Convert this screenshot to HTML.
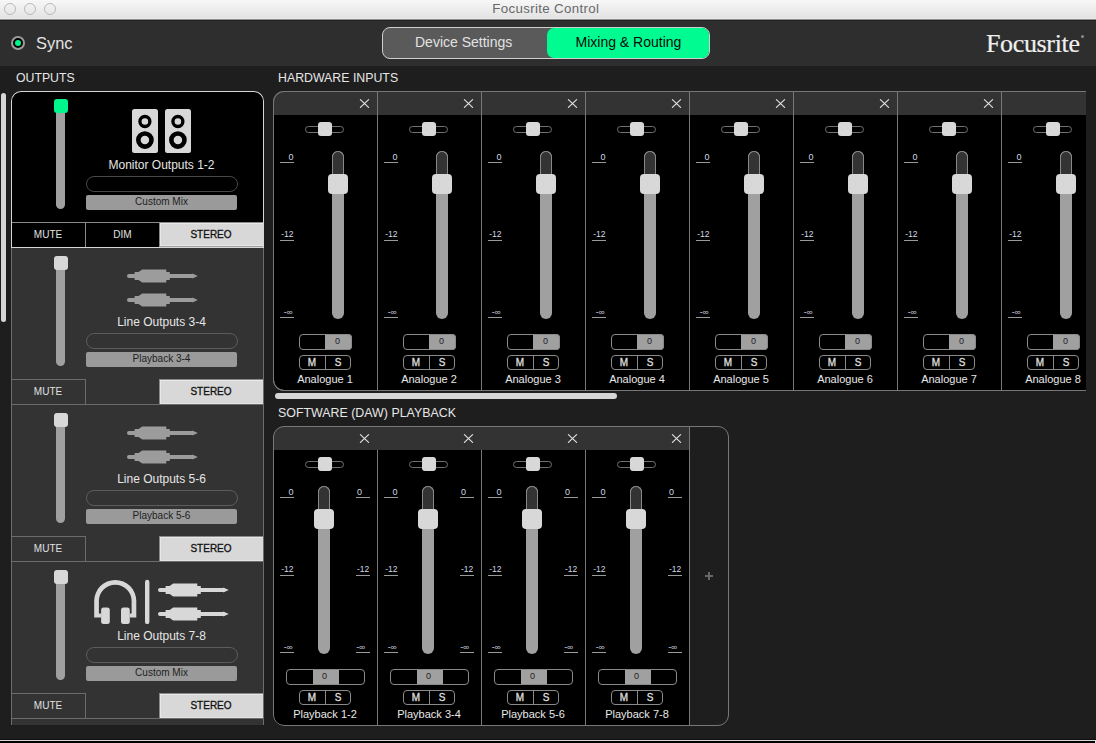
<!DOCTYPE html>
<html><head><meta charset="utf-8"><title>Focusrite Control</title>
<style>
*{margin:0;padding:0;box-sizing:border-box;}
html,body{width:1096px;height:743px;overflow:hidden;background:#1e1e1e;font-family:"Liberation Sans",sans-serif;}
.ab{position:absolute;}
.t{position:absolute;white-space:nowrap;line-height:1;}
</style></head><body>

<div class="ab" style="left:0;top:0;width:1096px;height:18px;background:linear-gradient(#f7f7f7,#e3e3e3);"></div>
<div class="ab" style="left:0;top:18px;width:1096px;height:1px;background:#eaeaea;"></div>
<div class="ab" style="left:0;top:19px;width:1096px;height:1px;background:#8c8c8c;"></div>
<div class="ab" style="left:0;top:20px;width:1096px;height:1px;background:#222;"></div>
<div class="ab" style="left:4px;top:3px;width:12px;height:12px;border-radius:50%;border:1px solid #b9b9b9;background:linear-gradient(#f2f2f2,#e6e6e6);"></div>
<div class="ab" style="left:24px;top:3px;width:12px;height:12px;border-radius:50%;border:1px solid #b9b9b9;background:linear-gradient(#f2f2f2,#e6e6e6);"></div>
<div class="ab" style="left:44px;top:3px;width:12px;height:12px;border-radius:50%;border:1px solid #b9b9b9;background:linear-gradient(#f2f2f2,#e6e6e6);"></div>
<div class="t" style="left:492.2px;top:2.0px;font-size:13.3px;letter-spacing:0.35px;color:#686868;">Focusrite Control</div>
<div class="ab" style="left:0;top:21px;width:1096px;height:45px;background:#2e2e2e;"></div>
<div class="ab" style="left:11px;top:36px;width:14px;height:14px;border-radius:50%;border:2px solid #9c9c9c;background:#000;"></div>
<div class="ab" style="left:14.6px;top:39.6px;width:6.8px;height:6.8px;border-radius:50%;background:#00f58c;"></div>
<div class="t" style="left:36px;top:35.2px;font-size:16.4px;color:#e4e4e4;">Sync</div>
<div class="ab" style="left:382px;top:27px;width:328px;height:32px;border-radius:8px;border:1px solid #cfcfcf;background:#5a5a5a;"></div>
<div class="ab" style="left:547px;top:28px;width:162px;height:30px;border-radius:7px;background:#00fc90;"></div>
<div class="t" style="left:415px;top:34.5px;font-size:14px;color:#e2e2e2;">Device Settings</div>
<div class="t" style="left:575.5px;top:34.5px;font-size:14px;color:#0a0a0a;">Mixing &amp; Routing</div>
<div class="t" style="left:986px;top:30.7px;font-family:'Liberation Serif',serif;font-size:26px;letter-spacing:-0.35px;color:#f0f0f0;-webkit-text-stroke:0.2px #f0f0f0;">Focusrite</div>
<div class="ab" style="left:1080.6px;top:34.8px;width:3.2px;height:3.2px;border-radius:50%;background:#8a8a8a;"></div>
<div class="t" style="left:16px;top:70.6px;font-size:13.6px;transform:scaleX(0.903);transform-origin:0 0;color:#e6e6e6;">OUTPUTS</div>
<div class="t" style="left:278.2px;top:70.7px;font-size:13.6px;transform:scaleX(0.907);transform-origin:0 0;color:#e6e6e6;">HARDWARE INPUTS</div>
<div class="t" style="left:278px;top:405.9px;font-size:13.6px;transform:scaleX(0.912);transform-origin:0 0;color:#e6e6e6;">SOFTWARE (DAW) PLAYBACK</div>
<div class="ab" style="left:0.9px;top:93px;width:5.3px;height:229px;border-radius:2.65px;background:#d6d6d6;"></div>
<div class="ab" style="left:275px;top:393px;width:342px;height:6px;border-radius:3px;background:#d6d6d6;"></div>
<div class="ab" style="left:11px;top:91px;width:253px;height:634px;overflow:hidden;border-radius:10px 10px 0 0;">
<div class="ab" style="left:0;top:0px;width:253px;height:156px;background:#000;"></div>
<div class="ab" style="left:0;top:156px;width:253px;height:157px;background:#333;"></div>
<div class="ab" style="left:0;top:313px;width:253px;height:157px;background:#333;"></div>
<div class="ab" style="left:0;top:470px;width:253px;height:164px;background:#333;"></div>
<div class="ab" style="left:45px;top:13px;width:9px;height:104.5px;border-radius:0 0 4.5px 4.5px;background:#a0a0a0;"></div>
<div class="ab" style="left:43px;top:8px;width:14px;height:14px;border-radius:3px;background:#00f58c;"></div>
<div class="t" style="left:75px;width:151px;text-align:center;top:68px;font-size:12px;color:#e6e6e6;">Monitor Outputs 1-2</div>
<div class="ab" style="left:74.5px;top:84.5px;width:152px;height:16px;border-radius:8px;border:1.4px solid #484848;"></div>
<div class="ab" style="left:75px;top:104px;width:151px;height:14.5px;border-radius:2px;background:#9a9a9a;"></div>
<div class="t" style="left:75px;width:151px;text-align:center;top:106px;font-size:10px;color:#1e1e1e;">Custom Mix</div>
<svg class="ab" style="left:121px;top:18px;" width="26" height="44" viewBox="0 0 26 44"><rect x="0" y="0" width="26" height="44" rx="2.5" fill="#d8d8d8"/><circle cx="12.9" cy="12.5" r="4.97" fill="none" stroke="#000" stroke-width="3.35"/><circle cx="12.9" cy="31.1" r="6.56" fill="none" stroke="#000" stroke-width="4.62"/></svg>
<svg class="ab" style="left:154px;top:18px;" width="26" height="44" viewBox="0 0 26 44"><rect x="0" y="0" width="26" height="44" rx="2.5" fill="#d8d8d8"/><circle cx="12.9" cy="12.5" r="4.97" fill="none" stroke="#000" stroke-width="3.35"/><circle cx="12.9" cy="31.1" r="6.56" fill="none" stroke="#000" stroke-width="4.62"/></svg>
<div class="ab" style="left:0;top:131px;width:253px;height:1px;background:#8a8a8a;"></div>
<div class="ab" style="left:74px;top:131px;width:1px;height:25px;background:#8a8a8a;"></div>
<div class="t" style="left:0;width:74px;text-align:center;top:139px;font-size:10px;color:#e0e0e0;">MUTE</div>
<div class="t" style="left:75px;width:73px;text-align:center;top:139px;font-size:10px;color:#e0e0e0;">DIM</div>
<div class="ab" style="left:148px;top:131px;width:104px;height:25px;background:#d8d8d8;border-left:1px solid #8a8a8a;border-top:1px solid #8a8a8a;border-bottom:1px solid #a0a0a0;box-shadow:inset 1px 1px 0 #e8e8e8,inset 0 -1px 0 #e4e4e4;"></div>
<div class="t" style="left:148px;width:104px;text-align:center;top:139px;font-size:10px;color:#111;-webkit-text-stroke:0.3px #111;">STEREO</div>
<div class="ab" style="left:0;top:156px;width:253px;height:1px;background:#d6d6d6;"></div>
<div class="ab" style="left:45px;top:170px;width:9px;height:104.5px;border-radius:0 0 4.5px 4.5px;background:#a0a0a0;"></div>
<div class="ab" style="left:43px;top:165px;width:14px;height:14px;border-radius:3px;background:#d8d8d8;"></div>
<div class="t" style="left:75px;width:151px;text-align:center;top:225px;font-size:12px;color:#e6e6e6;">Line Outputs 3-4</div>
<div class="ab" style="left:74.5px;top:241.5px;width:152px;height:16px;border-radius:8px;border:1.4px solid #5c5c5c;"></div>
<div class="ab" style="left:75px;top:261px;width:151px;height:14.5px;border-radius:2px;background:#9a9a9a;"></div>
<div class="t" style="left:75px;width:151px;text-align:center;top:263px;font-size:10px;color:#1e1e1e;">Playback 3-4</div>
<svg class="ab" style="left:116.4px;top:177px;" width="72" height="16" viewBox="0 0 72 16"><g fill="#9c9c9c"><rect x="0" y="6" width="10" height="4" rx="2"/><path d="M7.6 4.2 Q7.6 4 8 4 L11.6 4 L15.2 1.6 L39.3 1.6 L39.3 4 L42.8 4 L42.8 12 L39.3 12 L39.3 14.4 L15.2 14.4 L11.6 12 L8 12 Q7.6 12 7.6 11.8 Z"/><rect x="42" y="6" width="24.5" height="4"/><path d="M65.3 5.4 L70.8 8 L65.3 10.6 Z"/></g></svg>
<svg class="ab" style="left:116.4px;top:201px;" width="72" height="16" viewBox="0 0 72 16"><g fill="#9c9c9c"><rect x="0" y="6" width="10" height="4" rx="2"/><path d="M7.6 4.2 Q7.6 4 8 4 L11.6 4 L15.2 1.6 L39.3 1.6 L39.3 4 L42.8 4 L42.8 12 L39.3 12 L39.3 14.4 L15.2 14.4 L11.6 12 L8 12 Q7.6 12 7.6 11.8 Z"/><rect x="42" y="6" width="24.5" height="4"/><path d="M65.3 5.4 L70.8 8 L65.3 10.6 Z"/></g></svg>
<div class="ab" style="left:0;top:288px;width:75px;height:25px;border-top:1px solid #6c6c6c;border-right:1px solid #6c6c6c;"></div>
<div class="t" style="left:0;width:74px;text-align:center;top:296px;font-size:10px;color:#e0e0e0;">MUTE</div>
<div class="ab" style="left:148px;top:288px;width:104px;height:25px;background:#d8d8d8;border-left:1px solid #8a8a8a;border-top:1px solid #8a8a8a;box-shadow:inset 1px 1px 0 #e8e8e8,inset 0 -1px 0 #e4e4e4;"></div>
<div class="t" style="left:148px;width:104px;text-align:center;top:296px;font-size:10px;color:#111;-webkit-text-stroke:0.3px #111;">STEREO</div>
<div class="ab" style="left:0;top:313px;width:253px;height:1px;background:#6c6c6c;"></div>
<div class="ab" style="left:45px;top:327px;width:9px;height:104.5px;border-radius:0 0 4.5px 4.5px;background:#a0a0a0;"></div>
<div class="ab" style="left:43px;top:322px;width:14px;height:14px;border-radius:3px;background:#d8d8d8;"></div>
<div class="t" style="left:75px;width:151px;text-align:center;top:382px;font-size:12px;color:#e6e6e6;">Line Outputs 5-6</div>
<div class="ab" style="left:74.5px;top:398.5px;width:152px;height:16px;border-radius:8px;border:1.4px solid #5c5c5c;"></div>
<div class="ab" style="left:75px;top:418px;width:151px;height:14.5px;border-radius:2px;background:#9a9a9a;"></div>
<div class="t" style="left:75px;width:151px;text-align:center;top:420px;font-size:10px;color:#1e1e1e;">Playback 5-6</div>
<svg class="ab" style="left:116.4px;top:334px;" width="72" height="16" viewBox="0 0 72 16"><g fill="#9c9c9c"><rect x="0" y="6" width="10" height="4" rx="2"/><path d="M7.6 4.2 Q7.6 4 8 4 L11.6 4 L15.2 1.6 L39.3 1.6 L39.3 4 L42.8 4 L42.8 12 L39.3 12 L39.3 14.4 L15.2 14.4 L11.6 12 L8 12 Q7.6 12 7.6 11.8 Z"/><rect x="42" y="6" width="24.5" height="4"/><path d="M65.3 5.4 L70.8 8 L65.3 10.6 Z"/></g></svg>
<svg class="ab" style="left:116.4px;top:358px;" width="72" height="16" viewBox="0 0 72 16"><g fill="#9c9c9c"><rect x="0" y="6" width="10" height="4" rx="2"/><path d="M7.6 4.2 Q7.6 4 8 4 L11.6 4 L15.2 1.6 L39.3 1.6 L39.3 4 L42.8 4 L42.8 12 L39.3 12 L39.3 14.4 L15.2 14.4 L11.6 12 L8 12 Q7.6 12 7.6 11.8 Z"/><rect x="42" y="6" width="24.5" height="4"/><path d="M65.3 5.4 L70.8 8 L65.3 10.6 Z"/></g></svg>
<div class="ab" style="left:0;top:445px;width:75px;height:25px;border-top:1px solid #6c6c6c;border-right:1px solid #6c6c6c;"></div>
<div class="t" style="left:0;width:74px;text-align:center;top:453px;font-size:10px;color:#e0e0e0;">MUTE</div>
<div class="ab" style="left:148px;top:445px;width:104px;height:25px;background:#d8d8d8;border-left:1px solid #8a8a8a;border-top:1px solid #8a8a8a;box-shadow:inset 1px 1px 0 #e8e8e8,inset 0 -1px 0 #e4e4e4;"></div>
<div class="t" style="left:148px;width:104px;text-align:center;top:453px;font-size:10px;color:#111;-webkit-text-stroke:0.3px #111;">STEREO</div>
<div class="ab" style="left:0;top:470px;width:253px;height:1px;background:#6c6c6c;"></div>
<div class="ab" style="left:45px;top:484px;width:9px;height:104.5px;border-radius:0 0 4.5px 4.5px;background:#a0a0a0;"></div>
<div class="ab" style="left:43px;top:479px;width:14px;height:14px;border-radius:3px;background:#d8d8d8;"></div>
<div class="t" style="left:75px;width:151px;text-align:center;top:539px;font-size:12px;color:#e6e6e6;">Line Outputs 7-8</div>
<div class="ab" style="left:74.5px;top:555.5px;width:152px;height:16px;border-radius:8px;border:1.4px solid #5c5c5c;"></div>
<div class="ab" style="left:75px;top:575px;width:151px;height:14.5px;border-radius:2px;background:#9a9a9a;"></div>
<div class="t" style="left:75px;width:151px;text-align:center;top:577px;font-size:10px;color:#1e1e1e;">Custom Mix</div>
<svg class="ab" style="left:81px;top:487px;" width="60" height="48" viewBox="0 0 60 48"><g fill="#d8d8d8"><path d="M2.2 39.6 L2.2 23 A21.05 21.05 0 0 1 44.3 23 L44.3 39.6 L37.8 39.6 L37.8 35.6 L39.6 35.6 L39.6 23 A16.35 16.35 0 0 0 6.9 23 L6.9 35.6 L9.1 35.6 L9.1 39.6 Z"/><rect x="9.1" y="29.4" width="8.7" height="16.7" rx="2.5"/><rect x="29" y="29.4" width="8.8" height="16.7" rx="2.5"/><rect x="53" y="1.8" width="4.4" height="44.3" rx="2.2"/></g></svg>
<svg class="ab" style="left:147.2px;top:490.79999999999995px;" width="72" height="16" viewBox="0 0 72 16"><g fill="#d8d8d8"><rect x="0" y="6" width="10" height="4" rx="2"/><path d="M7.6 4.2 Q7.6 4 8 4 L11.6 4 L15.2 1.6 L39.3 1.6 L39.3 4 L42.8 4 L42.8 12 L39.3 12 L39.3 14.4 L15.2 14.4 L11.6 12 L8 12 Q7.6 12 7.6 11.8 Z"/><rect x="42" y="6" width="24.5" height="4"/><path d="M65.3 5.4 L70.8 8 L65.3 10.6 Z"/></g></svg>
<svg class="ab" style="left:147.2px;top:515px;" width="72" height="16" viewBox="0 0 72 16"><g fill="#d8d8d8"><rect x="0" y="6" width="10" height="4" rx="2"/><path d="M7.6 4.2 Q7.6 4 8 4 L11.6 4 L15.2 1.6 L39.3 1.6 L39.3 4 L42.8 4 L42.8 12 L39.3 12 L39.3 14.4 L15.2 14.4 L11.6 12 L8 12 Q7.6 12 7.6 11.8 Z"/><rect x="42" y="6" width="24.5" height="4"/><path d="M65.3 5.4 L70.8 8 L65.3 10.6 Z"/></g></svg>
<div class="ab" style="left:0;top:602px;width:75px;height:25px;border-top:1px solid #6c6c6c;border-right:1px solid #6c6c6c;"></div>
<div class="t" style="left:0;width:74px;text-align:center;top:610px;font-size:10px;color:#e0e0e0;">MUTE</div>
<div class="ab" style="left:148px;top:602px;width:104px;height:25px;background:#d8d8d8;border-left:1px solid #8a8a8a;border-top:1px solid #8a8a8a;box-shadow:inset 1px 1px 0 #e8e8e8,inset 0 -1px 0 #e4e4e4;"></div>
<div class="t" style="left:148px;width:104px;text-align:center;top:610px;font-size:10px;color:#111;-webkit-text-stroke:0.3px #111;">STEREO</div>
<div class="ab" style="left:0;top:627px;width:253px;height:1px;background:#6c6c6c;"></div>
</div>
<div class="ab" style="left:11px;top:91px;width:253px;height:157px;border:1px solid #d6d6d6;border-bottom:none;border-radius:10px 10px 0 0;"></div>
<div class="ab" style="left:11px;top:248px;width:1px;height:477px;background:#6c6c6c;"></div>
<div class="ab" style="left:263px;top:248px;width:1px;height:477px;background:#6c6c6c;"></div>
<div class="ab" style="left:273px;top:91px;width:813px;height:300px;overflow:hidden;border-radius:11px 0 0 11px;">
<div class="ab" style="left:0;top:0;width:900px;height:300px;background:#000;border:1px solid #777;border-radius:11px 0 0 11px;"></div>
<div class="ab" style="left:0px;top:0px;width:104px;height:24px;background:#333;"></div><svg class="ab" style="left:86px;top:7px;" width="11" height="11" viewBox="0 0 11 11"><path d="M1.4 1.6 L9.6 9.4 M9.6 1.6 L1.4 9.4" stroke="#dedede" stroke-width="1.2" stroke-linecap="round"/></svg><div class="ab" style="left:32.3px;top:34.5px;width:39px;height:7.5px;border-radius:3.75px;border:1.3px solid #717171;"></div><div class="ab" style="left:45px;top:31px;width:14px;height:14px;border-radius:3px;background:#d8d8d8;"></div><div class="ab" style="left:59px;top:60px;width:12px;height:167.5px;border-radius:6px;background:#a0a0a0;"></div><div class="ab" style="left:59px;top:60px;width:12px;height:30px;border-radius:6px 6px 0 0;background:#333;border:1px solid #888;border-bottom:none;"></div><div class="ab" style="left:55px;top:83px;width:20px;height:20px;border-radius:4px;background:#d8d8d8;"></div><div class="ab" style="left:7px;top:71px;width:14px;height:1px;background:#9a9a9a;"></div><div class="t" style="left:-13px;width:33.5px;text-align:right;top:62.2px;font-size:9px;color:#d0d8e0;">0</div><div class="ab" style="left:7px;top:148.5px;width:14px;height:1px;background:#9a9a9a;"></div><div class="t" style="left:-13px;width:33.5px;text-align:right;top:138.6px;font-size:8.5px;color:#d0d8e0;">-12</div><div class="ab" style="left:7px;top:226px;width:14px;height:1px;background:#9a9a9a;"></div><div class="t" style="left:-13px;width:32.7px;text-align:right;top:216.7px;font-size:8.6px;color:#d0d8e0;">-∞</div><div class="ab" style="left:52px;top:243px;width:27px;height:16px;border-radius:0 4px 4px 0;background:#a0a0a0;"></div><div class="ab" style="left:26px;top:243px;width:53px;height:16px;border-radius:4px;border:1px solid #8a8a8a;"></div><div class="t" style="left:51px;width:27px;text-align:center;top:246.2px;font-size:9px;color:#222;">0</div><div class="ab" style="left:26px;top:264px;width:52px;height:15px;border-radius:4px;border:1px solid #8a8a8a;"></div><div class="ab" style="left:51.5px;top:264px;width:1.3px;height:15px;background:#8a8a8a;"></div><div class="t" style="left:26px;width:26px;text-align:center;top:266.8px;font-size:10px;color:#dcdcdc;-webkit-text-stroke:0.35px #dcdcdc;">M</div><div class="t" style="left:52px;width:26px;text-align:center;top:266.8px;font-size:10px;color:#dcdcdc;-webkit-text-stroke:0.35px #dcdcdc;">S</div><div class="t" style="left:2px;width:100px;text-align:center;top:283px;font-size:11px;color:#e8e8e8;">Analogue 1</div>
<div class="ab" style="left:104px;top:0px;width:104px;height:24px;background:#333;"></div><svg class="ab" style="left:190px;top:7px;" width="11" height="11" viewBox="0 0 11 11"><path d="M1.4 1.6 L9.6 9.4 M9.6 1.6 L1.4 9.4" stroke="#dedede" stroke-width="1.2" stroke-linecap="round"/></svg><div class="ab" style="left:136.3px;top:34.5px;width:39px;height:7.5px;border-radius:3.75px;border:1.3px solid #717171;"></div><div class="ab" style="left:149px;top:31px;width:14px;height:14px;border-radius:3px;background:#d8d8d8;"></div><div class="ab" style="left:163px;top:60px;width:12px;height:167.5px;border-radius:6px;background:#a0a0a0;"></div><div class="ab" style="left:163px;top:60px;width:12px;height:30px;border-radius:6px 6px 0 0;background:#333;border:1px solid #888;border-bottom:none;"></div><div class="ab" style="left:159px;top:83px;width:20px;height:20px;border-radius:4px;background:#d8d8d8;"></div><div class="ab" style="left:111px;top:71px;width:14px;height:1px;background:#9a9a9a;"></div><div class="t" style="left:91px;width:33.5px;text-align:right;top:62.2px;font-size:9px;color:#d0d8e0;">0</div><div class="ab" style="left:111px;top:148.5px;width:14px;height:1px;background:#9a9a9a;"></div><div class="t" style="left:91px;width:33.5px;text-align:right;top:138.6px;font-size:8.5px;color:#d0d8e0;">-12</div><div class="ab" style="left:111px;top:226px;width:14px;height:1px;background:#9a9a9a;"></div><div class="t" style="left:91px;width:32.7px;text-align:right;top:216.7px;font-size:8.6px;color:#d0d8e0;">-∞</div><div class="ab" style="left:156px;top:243px;width:27px;height:16px;border-radius:0 4px 4px 0;background:#a0a0a0;"></div><div class="ab" style="left:130px;top:243px;width:53px;height:16px;border-radius:4px;border:1px solid #8a8a8a;"></div><div class="t" style="left:155px;width:27px;text-align:center;top:246.2px;font-size:9px;color:#222;">0</div><div class="ab" style="left:130px;top:264px;width:52px;height:15px;border-radius:4px;border:1px solid #8a8a8a;"></div><div class="ab" style="left:155.5px;top:264px;width:1.3px;height:15px;background:#8a8a8a;"></div><div class="t" style="left:130px;width:26px;text-align:center;top:266.8px;font-size:10px;color:#dcdcdc;-webkit-text-stroke:0.35px #dcdcdc;">M</div><div class="t" style="left:156px;width:26px;text-align:center;top:266.8px;font-size:10px;color:#dcdcdc;-webkit-text-stroke:0.35px #dcdcdc;">S</div><div class="t" style="left:106px;width:100px;text-align:center;top:283px;font-size:11px;color:#e8e8e8;">Analogue 2</div>
<div class="ab" style="left:104px;top:0;width:1px;height:300px;background:#777;"></div>
<div class="ab" style="left:208px;top:0px;width:104px;height:24px;background:#333;"></div><svg class="ab" style="left:294px;top:7px;" width="11" height="11" viewBox="0 0 11 11"><path d="M1.4 1.6 L9.6 9.4 M9.6 1.6 L1.4 9.4" stroke="#dedede" stroke-width="1.2" stroke-linecap="round"/></svg><div class="ab" style="left:240.3px;top:34.5px;width:39px;height:7.5px;border-radius:3.75px;border:1.3px solid #717171;"></div><div class="ab" style="left:253px;top:31px;width:14px;height:14px;border-radius:3px;background:#d8d8d8;"></div><div class="ab" style="left:267px;top:60px;width:12px;height:167.5px;border-radius:6px;background:#a0a0a0;"></div><div class="ab" style="left:267px;top:60px;width:12px;height:30px;border-radius:6px 6px 0 0;background:#333;border:1px solid #888;border-bottom:none;"></div><div class="ab" style="left:263px;top:83px;width:20px;height:20px;border-radius:4px;background:#d8d8d8;"></div><div class="ab" style="left:215px;top:71px;width:14px;height:1px;background:#9a9a9a;"></div><div class="t" style="left:195px;width:33.5px;text-align:right;top:62.2px;font-size:9px;color:#d0d8e0;">0</div><div class="ab" style="left:215px;top:148.5px;width:14px;height:1px;background:#9a9a9a;"></div><div class="t" style="left:195px;width:33.5px;text-align:right;top:138.6px;font-size:8.5px;color:#d0d8e0;">-12</div><div class="ab" style="left:215px;top:226px;width:14px;height:1px;background:#9a9a9a;"></div><div class="t" style="left:195px;width:32.7px;text-align:right;top:216.7px;font-size:8.6px;color:#d0d8e0;">-∞</div><div class="ab" style="left:260px;top:243px;width:27px;height:16px;border-radius:0 4px 4px 0;background:#a0a0a0;"></div><div class="ab" style="left:234px;top:243px;width:53px;height:16px;border-radius:4px;border:1px solid #8a8a8a;"></div><div class="t" style="left:259px;width:27px;text-align:center;top:246.2px;font-size:9px;color:#222;">0</div><div class="ab" style="left:234px;top:264px;width:52px;height:15px;border-radius:4px;border:1px solid #8a8a8a;"></div><div class="ab" style="left:259.5px;top:264px;width:1.3px;height:15px;background:#8a8a8a;"></div><div class="t" style="left:234px;width:26px;text-align:center;top:266.8px;font-size:10px;color:#dcdcdc;-webkit-text-stroke:0.35px #dcdcdc;">M</div><div class="t" style="left:260px;width:26px;text-align:center;top:266.8px;font-size:10px;color:#dcdcdc;-webkit-text-stroke:0.35px #dcdcdc;">S</div><div class="t" style="left:210px;width:100px;text-align:center;top:283px;font-size:11px;color:#e8e8e8;">Analogue 3</div>
<div class="ab" style="left:208px;top:0;width:1px;height:300px;background:#777;"></div>
<div class="ab" style="left:312px;top:0px;width:104px;height:24px;background:#333;"></div><svg class="ab" style="left:398px;top:7px;" width="11" height="11" viewBox="0 0 11 11"><path d="M1.4 1.6 L9.6 9.4 M9.6 1.6 L1.4 9.4" stroke="#dedede" stroke-width="1.2" stroke-linecap="round"/></svg><div class="ab" style="left:344.3px;top:34.5px;width:39px;height:7.5px;border-radius:3.75px;border:1.3px solid #717171;"></div><div class="ab" style="left:357px;top:31px;width:14px;height:14px;border-radius:3px;background:#d8d8d8;"></div><div class="ab" style="left:371px;top:60px;width:12px;height:167.5px;border-radius:6px;background:#a0a0a0;"></div><div class="ab" style="left:371px;top:60px;width:12px;height:30px;border-radius:6px 6px 0 0;background:#333;border:1px solid #888;border-bottom:none;"></div><div class="ab" style="left:367px;top:83px;width:20px;height:20px;border-radius:4px;background:#d8d8d8;"></div><div class="ab" style="left:319px;top:71px;width:14px;height:1px;background:#9a9a9a;"></div><div class="t" style="left:299px;width:33.5px;text-align:right;top:62.2px;font-size:9px;color:#d0d8e0;">0</div><div class="ab" style="left:319px;top:148.5px;width:14px;height:1px;background:#9a9a9a;"></div><div class="t" style="left:299px;width:33.5px;text-align:right;top:138.6px;font-size:8.5px;color:#d0d8e0;">-12</div><div class="ab" style="left:319px;top:226px;width:14px;height:1px;background:#9a9a9a;"></div><div class="t" style="left:299px;width:32.7px;text-align:right;top:216.7px;font-size:8.6px;color:#d0d8e0;">-∞</div><div class="ab" style="left:364px;top:243px;width:27px;height:16px;border-radius:0 4px 4px 0;background:#a0a0a0;"></div><div class="ab" style="left:338px;top:243px;width:53px;height:16px;border-radius:4px;border:1px solid #8a8a8a;"></div><div class="t" style="left:363px;width:27px;text-align:center;top:246.2px;font-size:9px;color:#222;">0</div><div class="ab" style="left:338px;top:264px;width:52px;height:15px;border-radius:4px;border:1px solid #8a8a8a;"></div><div class="ab" style="left:363.5px;top:264px;width:1.3px;height:15px;background:#8a8a8a;"></div><div class="t" style="left:338px;width:26px;text-align:center;top:266.8px;font-size:10px;color:#dcdcdc;-webkit-text-stroke:0.35px #dcdcdc;">M</div><div class="t" style="left:364px;width:26px;text-align:center;top:266.8px;font-size:10px;color:#dcdcdc;-webkit-text-stroke:0.35px #dcdcdc;">S</div><div class="t" style="left:314px;width:100px;text-align:center;top:283px;font-size:11px;color:#e8e8e8;">Analogue 4</div>
<div class="ab" style="left:312px;top:0;width:1px;height:300px;background:#777;"></div>
<div class="ab" style="left:416px;top:0px;width:104px;height:24px;background:#333;"></div><svg class="ab" style="left:502px;top:7px;" width="11" height="11" viewBox="0 0 11 11"><path d="M1.4 1.6 L9.6 9.4 M9.6 1.6 L1.4 9.4" stroke="#dedede" stroke-width="1.2" stroke-linecap="round"/></svg><div class="ab" style="left:448.3px;top:34.5px;width:39px;height:7.5px;border-radius:3.75px;border:1.3px solid #717171;"></div><div class="ab" style="left:461px;top:31px;width:14px;height:14px;border-radius:3px;background:#d8d8d8;"></div><div class="ab" style="left:475px;top:60px;width:12px;height:167.5px;border-radius:6px;background:#a0a0a0;"></div><div class="ab" style="left:475px;top:60px;width:12px;height:30px;border-radius:6px 6px 0 0;background:#333;border:1px solid #888;border-bottom:none;"></div><div class="ab" style="left:471px;top:83px;width:20px;height:20px;border-radius:4px;background:#d8d8d8;"></div><div class="ab" style="left:423px;top:71px;width:14px;height:1px;background:#9a9a9a;"></div><div class="t" style="left:403px;width:33.5px;text-align:right;top:62.2px;font-size:9px;color:#d0d8e0;">0</div><div class="ab" style="left:423px;top:148.5px;width:14px;height:1px;background:#9a9a9a;"></div><div class="t" style="left:403px;width:33.5px;text-align:right;top:138.6px;font-size:8.5px;color:#d0d8e0;">-12</div><div class="ab" style="left:423px;top:226px;width:14px;height:1px;background:#9a9a9a;"></div><div class="t" style="left:403px;width:32.7px;text-align:right;top:216.7px;font-size:8.6px;color:#d0d8e0;">-∞</div><div class="ab" style="left:468px;top:243px;width:27px;height:16px;border-radius:0 4px 4px 0;background:#a0a0a0;"></div><div class="ab" style="left:442px;top:243px;width:53px;height:16px;border-radius:4px;border:1px solid #8a8a8a;"></div><div class="t" style="left:467px;width:27px;text-align:center;top:246.2px;font-size:9px;color:#222;">0</div><div class="ab" style="left:442px;top:264px;width:52px;height:15px;border-radius:4px;border:1px solid #8a8a8a;"></div><div class="ab" style="left:467.5px;top:264px;width:1.3px;height:15px;background:#8a8a8a;"></div><div class="t" style="left:442px;width:26px;text-align:center;top:266.8px;font-size:10px;color:#dcdcdc;-webkit-text-stroke:0.35px #dcdcdc;">M</div><div class="t" style="left:468px;width:26px;text-align:center;top:266.8px;font-size:10px;color:#dcdcdc;-webkit-text-stroke:0.35px #dcdcdc;">S</div><div class="t" style="left:418px;width:100px;text-align:center;top:283px;font-size:11px;color:#e8e8e8;">Analogue 5</div>
<div class="ab" style="left:416px;top:0;width:1px;height:300px;background:#777;"></div>
<div class="ab" style="left:520px;top:0px;width:104px;height:24px;background:#333;"></div><svg class="ab" style="left:606px;top:7px;" width="11" height="11" viewBox="0 0 11 11"><path d="M1.4 1.6 L9.6 9.4 M9.6 1.6 L1.4 9.4" stroke="#dedede" stroke-width="1.2" stroke-linecap="round"/></svg><div class="ab" style="left:552.3px;top:34.5px;width:39px;height:7.5px;border-radius:3.75px;border:1.3px solid #717171;"></div><div class="ab" style="left:565px;top:31px;width:14px;height:14px;border-radius:3px;background:#d8d8d8;"></div><div class="ab" style="left:579px;top:60px;width:12px;height:167.5px;border-radius:6px;background:#a0a0a0;"></div><div class="ab" style="left:579px;top:60px;width:12px;height:30px;border-radius:6px 6px 0 0;background:#333;border:1px solid #888;border-bottom:none;"></div><div class="ab" style="left:575px;top:83px;width:20px;height:20px;border-radius:4px;background:#d8d8d8;"></div><div class="ab" style="left:527px;top:71px;width:14px;height:1px;background:#9a9a9a;"></div><div class="t" style="left:507px;width:33.5px;text-align:right;top:62.2px;font-size:9px;color:#d0d8e0;">0</div><div class="ab" style="left:527px;top:148.5px;width:14px;height:1px;background:#9a9a9a;"></div><div class="t" style="left:507px;width:33.5px;text-align:right;top:138.6px;font-size:8.5px;color:#d0d8e0;">-12</div><div class="ab" style="left:527px;top:226px;width:14px;height:1px;background:#9a9a9a;"></div><div class="t" style="left:507px;width:32.7px;text-align:right;top:216.7px;font-size:8.6px;color:#d0d8e0;">-∞</div><div class="ab" style="left:572px;top:243px;width:27px;height:16px;border-radius:0 4px 4px 0;background:#a0a0a0;"></div><div class="ab" style="left:546px;top:243px;width:53px;height:16px;border-radius:4px;border:1px solid #8a8a8a;"></div><div class="t" style="left:571px;width:27px;text-align:center;top:246.2px;font-size:9px;color:#222;">0</div><div class="ab" style="left:546px;top:264px;width:52px;height:15px;border-radius:4px;border:1px solid #8a8a8a;"></div><div class="ab" style="left:571.5px;top:264px;width:1.3px;height:15px;background:#8a8a8a;"></div><div class="t" style="left:546px;width:26px;text-align:center;top:266.8px;font-size:10px;color:#dcdcdc;-webkit-text-stroke:0.35px #dcdcdc;">M</div><div class="t" style="left:572px;width:26px;text-align:center;top:266.8px;font-size:10px;color:#dcdcdc;-webkit-text-stroke:0.35px #dcdcdc;">S</div><div class="t" style="left:522px;width:100px;text-align:center;top:283px;font-size:11px;color:#e8e8e8;">Analogue 6</div>
<div class="ab" style="left:520px;top:0;width:1px;height:300px;background:#777;"></div>
<div class="ab" style="left:624px;top:0px;width:104px;height:24px;background:#333;"></div><svg class="ab" style="left:710px;top:7px;" width="11" height="11" viewBox="0 0 11 11"><path d="M1.4 1.6 L9.6 9.4 M9.6 1.6 L1.4 9.4" stroke="#dedede" stroke-width="1.2" stroke-linecap="round"/></svg><div class="ab" style="left:656.3px;top:34.5px;width:39px;height:7.5px;border-radius:3.75px;border:1.3px solid #717171;"></div><div class="ab" style="left:669px;top:31px;width:14px;height:14px;border-radius:3px;background:#d8d8d8;"></div><div class="ab" style="left:683px;top:60px;width:12px;height:167.5px;border-radius:6px;background:#a0a0a0;"></div><div class="ab" style="left:683px;top:60px;width:12px;height:30px;border-radius:6px 6px 0 0;background:#333;border:1px solid #888;border-bottom:none;"></div><div class="ab" style="left:679px;top:83px;width:20px;height:20px;border-radius:4px;background:#d8d8d8;"></div><div class="ab" style="left:631px;top:71px;width:14px;height:1px;background:#9a9a9a;"></div><div class="t" style="left:611px;width:33.5px;text-align:right;top:62.2px;font-size:9px;color:#d0d8e0;">0</div><div class="ab" style="left:631px;top:148.5px;width:14px;height:1px;background:#9a9a9a;"></div><div class="t" style="left:611px;width:33.5px;text-align:right;top:138.6px;font-size:8.5px;color:#d0d8e0;">-12</div><div class="ab" style="left:631px;top:226px;width:14px;height:1px;background:#9a9a9a;"></div><div class="t" style="left:611px;width:32.7px;text-align:right;top:216.7px;font-size:8.6px;color:#d0d8e0;">-∞</div><div class="ab" style="left:676px;top:243px;width:27px;height:16px;border-radius:0 4px 4px 0;background:#a0a0a0;"></div><div class="ab" style="left:650px;top:243px;width:53px;height:16px;border-radius:4px;border:1px solid #8a8a8a;"></div><div class="t" style="left:675px;width:27px;text-align:center;top:246.2px;font-size:9px;color:#222;">0</div><div class="ab" style="left:650px;top:264px;width:52px;height:15px;border-radius:4px;border:1px solid #8a8a8a;"></div><div class="ab" style="left:675.5px;top:264px;width:1.3px;height:15px;background:#8a8a8a;"></div><div class="t" style="left:650px;width:26px;text-align:center;top:266.8px;font-size:10px;color:#dcdcdc;-webkit-text-stroke:0.35px #dcdcdc;">M</div><div class="t" style="left:676px;width:26px;text-align:center;top:266.8px;font-size:10px;color:#dcdcdc;-webkit-text-stroke:0.35px #dcdcdc;">S</div><div class="t" style="left:626px;width:100px;text-align:center;top:283px;font-size:11px;color:#e8e8e8;">Analogue 7</div>
<div class="ab" style="left:624px;top:0;width:1px;height:300px;background:#777;"></div>
<div class="ab" style="left:728px;top:0px;width:104px;height:24px;background:#333;"></div><svg class="ab" style="left:814px;top:7px;" width="11" height="11" viewBox="0 0 11 11"><path d="M1.4 1.6 L9.6 9.4 M9.6 1.6 L1.4 9.4" stroke="#dedede" stroke-width="1.2" stroke-linecap="round"/></svg><div class="ab" style="left:760.3px;top:34.5px;width:39px;height:7.5px;border-radius:3.75px;border:1.3px solid #717171;"></div><div class="ab" style="left:773px;top:31px;width:14px;height:14px;border-radius:3px;background:#d8d8d8;"></div><div class="ab" style="left:787px;top:60px;width:12px;height:167.5px;border-radius:6px;background:#a0a0a0;"></div><div class="ab" style="left:787px;top:60px;width:12px;height:30px;border-radius:6px 6px 0 0;background:#333;border:1px solid #888;border-bottom:none;"></div><div class="ab" style="left:783px;top:83px;width:20px;height:20px;border-radius:4px;background:#d8d8d8;"></div><div class="ab" style="left:735px;top:71px;width:14px;height:1px;background:#9a9a9a;"></div><div class="t" style="left:715px;width:33.5px;text-align:right;top:62.2px;font-size:9px;color:#d0d8e0;">0</div><div class="ab" style="left:735px;top:148.5px;width:14px;height:1px;background:#9a9a9a;"></div><div class="t" style="left:715px;width:33.5px;text-align:right;top:138.6px;font-size:8.5px;color:#d0d8e0;">-12</div><div class="ab" style="left:735px;top:226px;width:14px;height:1px;background:#9a9a9a;"></div><div class="t" style="left:715px;width:32.7px;text-align:right;top:216.7px;font-size:8.6px;color:#d0d8e0;">-∞</div><div class="ab" style="left:780px;top:243px;width:27px;height:16px;border-radius:0 4px 4px 0;background:#a0a0a0;"></div><div class="ab" style="left:754px;top:243px;width:53px;height:16px;border-radius:4px;border:1px solid #8a8a8a;"></div><div class="t" style="left:779px;width:27px;text-align:center;top:246.2px;font-size:9px;color:#222;">0</div><div class="ab" style="left:754px;top:264px;width:52px;height:15px;border-radius:4px;border:1px solid #8a8a8a;"></div><div class="ab" style="left:779.5px;top:264px;width:1.3px;height:15px;background:#8a8a8a;"></div><div class="t" style="left:754px;width:26px;text-align:center;top:266.8px;font-size:10px;color:#dcdcdc;-webkit-text-stroke:0.35px #dcdcdc;">M</div><div class="t" style="left:780px;width:26px;text-align:center;top:266.8px;font-size:10px;color:#dcdcdc;-webkit-text-stroke:0.35px #dcdcdc;">S</div><div class="t" style="left:730px;width:100px;text-align:center;top:283px;font-size:11px;color:#e8e8e8;">Analogue 8</div>
<div class="ab" style="left:728px;top:0;width:1px;height:300px;background:#777;"></div>
<div class="ab" style="left:832px;top:0;width:1px;height:300px;background:#777;"></div>
</div>
<div class="ab" style="left:273px;top:91px;width:813px;height:300px;border:1px solid #777;border-right:none;border-radius:11px 0 0 11px;pointer-events:none;"></div>
<div class="ab" style="left:273px;top:426px;width:456px;height:300px;overflow:hidden;border-radius:11px;background:#1e1e1e;">
<div class="ab" style="left:0;top:0;width:416px;height:300px;background:#000;"></div>
<div class="ab" style="left:0px;top:0px;width:104px;height:24px;background:#333;"></div><svg class="ab" style="left:86px;top:7px;" width="11" height="11" viewBox="0 0 11 11"><path d="M1.4 1.6 L9.6 9.4 M9.6 1.6 L1.4 9.4" stroke="#dedede" stroke-width="1.2" stroke-linecap="round"/></svg><div class="ab" style="left:32.3px;top:34.5px;width:39px;height:7.5px;border-radius:3.75px;border:1.3px solid #717171;"></div><div class="ab" style="left:45px;top:31px;width:14px;height:14px;border-radius:3px;background:#d8d8d8;"></div><div class="ab" style="left:45px;top:60px;width:12px;height:167.5px;border-radius:6px;background:#a0a0a0;"></div><div class="ab" style="left:45px;top:60px;width:12px;height:30px;border-radius:6px 6px 0 0;background:#333;border:1px solid #888;border-bottom:none;"></div><div class="ab" style="left:41px;top:83px;width:20px;height:20px;border-radius:4px;background:#d8d8d8;"></div><div class="ab" style="left:7px;top:71px;width:14px;height:1px;background:#9a9a9a;"></div><div class="t" style="left:-13px;width:33.5px;text-align:right;top:62.2px;font-size:9px;color:#d0d8e0;">0</div><div class="ab" style="left:83px;top:71px;width:14px;height:1px;background:#9a9a9a;"></div><div class="t" style="left:84px;top:62.2px;font-size:9px;color:#d0d8e0;">0</div><div class="ab" style="left:7px;top:148.5px;width:14px;height:1px;background:#9a9a9a;"></div><div class="t" style="left:-13px;width:33.5px;text-align:right;top:138.6px;font-size:8.5px;color:#d0d8e0;">-12</div><div class="ab" style="left:83px;top:148.5px;width:14px;height:1px;background:#9a9a9a;"></div><div class="t" style="left:84px;top:138.6px;font-size:8.5px;color:#d0d8e0;">-12</div><div class="ab" style="left:7px;top:226px;width:14px;height:1px;background:#9a9a9a;"></div><div class="t" style="left:-13px;width:32.7px;text-align:right;top:216.7px;font-size:8.6px;color:#d0d8e0;">-∞</div><div class="ab" style="left:83px;top:226px;width:14px;height:1px;background:#9a9a9a;"></div><div class="t" style="left:83.2px;top:216.7px;font-size:8.6px;color:#d0d8e0;">-∞</div><div class="ab" style="left:40px;top:243.5px;width:26px;height:15px;background:#a0a0a0;"></div><div class="ab" style="left:13px;top:243px;width:79px;height:16px;border-radius:4px;border:1px solid #8a8a8a;"></div><div class="t" style="left:38.6px;width:26px;text-align:center;top:246.2px;font-size:9px;color:#222;">0</div><div class="ab" style="left:26px;top:264px;width:52px;height:15px;border-radius:4px;border:1px solid #8a8a8a;"></div><div class="ab" style="left:51.5px;top:264px;width:1.3px;height:15px;background:#8a8a8a;"></div><div class="t" style="left:26px;width:26px;text-align:center;top:266.8px;font-size:10px;color:#dcdcdc;-webkit-text-stroke:0.35px #dcdcdc;">M</div><div class="t" style="left:52px;width:26px;text-align:center;top:266.8px;font-size:10px;color:#dcdcdc;-webkit-text-stroke:0.35px #dcdcdc;">S</div><div class="t" style="left:2px;width:100px;text-align:center;top:283px;font-size:11px;color:#e8e8e8;">Playback 1-2</div>
<div class="ab" style="left:104px;top:0;width:1px;height:300px;background:#777;"></div>
<div class="ab" style="left:104px;top:0px;width:104px;height:24px;background:#333;"></div><svg class="ab" style="left:190px;top:7px;" width="11" height="11" viewBox="0 0 11 11"><path d="M1.4 1.6 L9.6 9.4 M9.6 1.6 L1.4 9.4" stroke="#dedede" stroke-width="1.2" stroke-linecap="round"/></svg><div class="ab" style="left:136.3px;top:34.5px;width:39px;height:7.5px;border-radius:3.75px;border:1.3px solid #717171;"></div><div class="ab" style="left:149px;top:31px;width:14px;height:14px;border-radius:3px;background:#d8d8d8;"></div><div class="ab" style="left:149px;top:60px;width:12px;height:167.5px;border-radius:6px;background:#a0a0a0;"></div><div class="ab" style="left:149px;top:60px;width:12px;height:30px;border-radius:6px 6px 0 0;background:#333;border:1px solid #888;border-bottom:none;"></div><div class="ab" style="left:145px;top:83px;width:20px;height:20px;border-radius:4px;background:#d8d8d8;"></div><div class="ab" style="left:111px;top:71px;width:14px;height:1px;background:#9a9a9a;"></div><div class="t" style="left:91px;width:33.5px;text-align:right;top:62.2px;font-size:9px;color:#d0d8e0;">0</div><div class="ab" style="left:187px;top:71px;width:14px;height:1px;background:#9a9a9a;"></div><div class="t" style="left:188px;top:62.2px;font-size:9px;color:#d0d8e0;">0</div><div class="ab" style="left:111px;top:148.5px;width:14px;height:1px;background:#9a9a9a;"></div><div class="t" style="left:91px;width:33.5px;text-align:right;top:138.6px;font-size:8.5px;color:#d0d8e0;">-12</div><div class="ab" style="left:187px;top:148.5px;width:14px;height:1px;background:#9a9a9a;"></div><div class="t" style="left:188px;top:138.6px;font-size:8.5px;color:#d0d8e0;">-12</div><div class="ab" style="left:111px;top:226px;width:14px;height:1px;background:#9a9a9a;"></div><div class="t" style="left:91px;width:32.7px;text-align:right;top:216.7px;font-size:8.6px;color:#d0d8e0;">-∞</div><div class="ab" style="left:187px;top:226px;width:14px;height:1px;background:#9a9a9a;"></div><div class="t" style="left:187.2px;top:216.7px;font-size:8.6px;color:#d0d8e0;">-∞</div><div class="ab" style="left:144px;top:243.5px;width:26px;height:15px;background:#a0a0a0;"></div><div class="ab" style="left:117px;top:243px;width:79px;height:16px;border-radius:4px;border:1px solid #8a8a8a;"></div><div class="t" style="left:142.6px;width:26px;text-align:center;top:246.2px;font-size:9px;color:#222;">0</div><div class="ab" style="left:130px;top:264px;width:52px;height:15px;border-radius:4px;border:1px solid #8a8a8a;"></div><div class="ab" style="left:155.5px;top:264px;width:1.3px;height:15px;background:#8a8a8a;"></div><div class="t" style="left:130px;width:26px;text-align:center;top:266.8px;font-size:10px;color:#dcdcdc;-webkit-text-stroke:0.35px #dcdcdc;">M</div><div class="t" style="left:156px;width:26px;text-align:center;top:266.8px;font-size:10px;color:#dcdcdc;-webkit-text-stroke:0.35px #dcdcdc;">S</div><div class="t" style="left:106px;width:100px;text-align:center;top:283px;font-size:11px;color:#e8e8e8;">Playback 3-4</div>
<div class="ab" style="left:208px;top:0;width:1px;height:300px;background:#777;"></div>
<div class="ab" style="left:208px;top:0px;width:104px;height:24px;background:#333;"></div><svg class="ab" style="left:294px;top:7px;" width="11" height="11" viewBox="0 0 11 11"><path d="M1.4 1.6 L9.6 9.4 M9.6 1.6 L1.4 9.4" stroke="#dedede" stroke-width="1.2" stroke-linecap="round"/></svg><div class="ab" style="left:240.3px;top:34.5px;width:39px;height:7.5px;border-radius:3.75px;border:1.3px solid #717171;"></div><div class="ab" style="left:253px;top:31px;width:14px;height:14px;border-radius:3px;background:#d8d8d8;"></div><div class="ab" style="left:253px;top:60px;width:12px;height:167.5px;border-radius:6px;background:#a0a0a0;"></div><div class="ab" style="left:253px;top:60px;width:12px;height:30px;border-radius:6px 6px 0 0;background:#333;border:1px solid #888;border-bottom:none;"></div><div class="ab" style="left:249px;top:83px;width:20px;height:20px;border-radius:4px;background:#d8d8d8;"></div><div class="ab" style="left:215px;top:71px;width:14px;height:1px;background:#9a9a9a;"></div><div class="t" style="left:195px;width:33.5px;text-align:right;top:62.2px;font-size:9px;color:#d0d8e0;">0</div><div class="ab" style="left:291px;top:71px;width:14px;height:1px;background:#9a9a9a;"></div><div class="t" style="left:292px;top:62.2px;font-size:9px;color:#d0d8e0;">0</div><div class="ab" style="left:215px;top:148.5px;width:14px;height:1px;background:#9a9a9a;"></div><div class="t" style="left:195px;width:33.5px;text-align:right;top:138.6px;font-size:8.5px;color:#d0d8e0;">-12</div><div class="ab" style="left:291px;top:148.5px;width:14px;height:1px;background:#9a9a9a;"></div><div class="t" style="left:292px;top:138.6px;font-size:8.5px;color:#d0d8e0;">-12</div><div class="ab" style="left:215px;top:226px;width:14px;height:1px;background:#9a9a9a;"></div><div class="t" style="left:195px;width:32.7px;text-align:right;top:216.7px;font-size:8.6px;color:#d0d8e0;">-∞</div><div class="ab" style="left:291px;top:226px;width:14px;height:1px;background:#9a9a9a;"></div><div class="t" style="left:291.2px;top:216.7px;font-size:8.6px;color:#d0d8e0;">-∞</div><div class="ab" style="left:248px;top:243.5px;width:26px;height:15px;background:#a0a0a0;"></div><div class="ab" style="left:221px;top:243px;width:79px;height:16px;border-radius:4px;border:1px solid #8a8a8a;"></div><div class="t" style="left:246.6px;width:26px;text-align:center;top:246.2px;font-size:9px;color:#222;">0</div><div class="ab" style="left:234px;top:264px;width:52px;height:15px;border-radius:4px;border:1px solid #8a8a8a;"></div><div class="ab" style="left:259.5px;top:264px;width:1.3px;height:15px;background:#8a8a8a;"></div><div class="t" style="left:234px;width:26px;text-align:center;top:266.8px;font-size:10px;color:#dcdcdc;-webkit-text-stroke:0.35px #dcdcdc;">M</div><div class="t" style="left:260px;width:26px;text-align:center;top:266.8px;font-size:10px;color:#dcdcdc;-webkit-text-stroke:0.35px #dcdcdc;">S</div><div class="t" style="left:210px;width:100px;text-align:center;top:283px;font-size:11px;color:#e8e8e8;">Playback 5-6</div>
<div class="ab" style="left:312px;top:0;width:1px;height:300px;background:#777;"></div>
<div class="ab" style="left:312px;top:0px;width:104px;height:24px;background:#333;"></div><svg class="ab" style="left:398px;top:7px;" width="11" height="11" viewBox="0 0 11 11"><path d="M1.4 1.6 L9.6 9.4 M9.6 1.6 L1.4 9.4" stroke="#dedede" stroke-width="1.2" stroke-linecap="round"/></svg><div class="ab" style="left:344.3px;top:34.5px;width:39px;height:7.5px;border-radius:3.75px;border:1.3px solid #717171;"></div><div class="ab" style="left:357px;top:31px;width:14px;height:14px;border-radius:3px;background:#d8d8d8;"></div><div class="ab" style="left:357px;top:60px;width:12px;height:167.5px;border-radius:6px;background:#a0a0a0;"></div><div class="ab" style="left:357px;top:60px;width:12px;height:30px;border-radius:6px 6px 0 0;background:#333;border:1px solid #888;border-bottom:none;"></div><div class="ab" style="left:353px;top:83px;width:20px;height:20px;border-radius:4px;background:#d8d8d8;"></div><div class="ab" style="left:319px;top:71px;width:14px;height:1px;background:#9a9a9a;"></div><div class="t" style="left:299px;width:33.5px;text-align:right;top:62.2px;font-size:9px;color:#d0d8e0;">0</div><div class="ab" style="left:395px;top:71px;width:14px;height:1px;background:#9a9a9a;"></div><div class="t" style="left:396px;top:62.2px;font-size:9px;color:#d0d8e0;">0</div><div class="ab" style="left:319px;top:148.5px;width:14px;height:1px;background:#9a9a9a;"></div><div class="t" style="left:299px;width:33.5px;text-align:right;top:138.6px;font-size:8.5px;color:#d0d8e0;">-12</div><div class="ab" style="left:395px;top:148.5px;width:14px;height:1px;background:#9a9a9a;"></div><div class="t" style="left:396px;top:138.6px;font-size:8.5px;color:#d0d8e0;">-12</div><div class="ab" style="left:319px;top:226px;width:14px;height:1px;background:#9a9a9a;"></div><div class="t" style="left:299px;width:32.7px;text-align:right;top:216.7px;font-size:8.6px;color:#d0d8e0;">-∞</div><div class="ab" style="left:395px;top:226px;width:14px;height:1px;background:#9a9a9a;"></div><div class="t" style="left:395.2px;top:216.7px;font-size:8.6px;color:#d0d8e0;">-∞</div><div class="ab" style="left:352px;top:243.5px;width:26px;height:15px;background:#a0a0a0;"></div><div class="ab" style="left:325px;top:243px;width:79px;height:16px;border-radius:4px;border:1px solid #8a8a8a;"></div><div class="t" style="left:350.6px;width:26px;text-align:center;top:246.2px;font-size:9px;color:#222;">0</div><div class="ab" style="left:338px;top:264px;width:52px;height:15px;border-radius:4px;border:1px solid #8a8a8a;"></div><div class="ab" style="left:363.5px;top:264px;width:1.3px;height:15px;background:#8a8a8a;"></div><div class="t" style="left:338px;width:26px;text-align:center;top:266.8px;font-size:10px;color:#dcdcdc;-webkit-text-stroke:0.35px #dcdcdc;">M</div><div class="t" style="left:364px;width:26px;text-align:center;top:266.8px;font-size:10px;color:#dcdcdc;-webkit-text-stroke:0.35px #dcdcdc;">S</div><div class="t" style="left:314px;width:100px;text-align:center;top:283px;font-size:11px;color:#e8e8e8;">Playback 7-8</div>
<div class="ab" style="left:416px;top:0;width:1px;height:300px;background:#777;"></div>
</div>
<div class="ab" style="left:273px;top:426px;width:456px;height:300px;border:1px solid #777;border-radius:11px;"></div>
<div class="ab" style="left:705px;top:575.3px;width:8px;height:1.5px;background:#666;"></div>
<div class="ab" style="left:708.3px;top:572px;width:1.5px;height:8px;background:#666;"></div>
<div class="ab" style="left:0;top:739px;width:1096px;height:1px;background:#0e0e0e;"></div>
<div class="ab" style="left:0;top:740px;width:1096px;height:1px;background:#d8d8d8;"></div>
<div class="ab" style="left:0;top:741px;width:1096px;height:2px;background:#000;"></div>
<div class="ab" style="left:1095px;top:740px;width:1px;height:3px;background:#e4e4e4;"></div>
</body></html>
